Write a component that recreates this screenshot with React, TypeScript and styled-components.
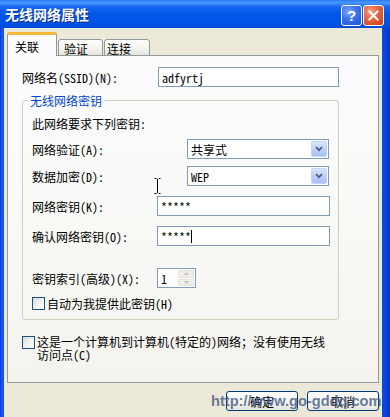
import React from 'react';
import styled, { createGlobalStyle } from 'styled-components';

const CJK = `"Noto Sans CJK SC", "Liberation Sans", sans-serif`;

const GlobalStyle = createGlobalStyle`
  html, body { margin: 0; padding: 0; background: #ffffff; }
  body { font-family: ${CJK}; font-size: 12px; }
`;

const Window = styled.div`
  position: relative;
  width: 390px;
  height: 417px;
  display: flex;
  flex-direction: column;
  overflow: hidden;
  background: linear-gradient(90deg, #0831d9 0px, #1e5df0 2px, #0a4fdc 4px, #0a4fdc 382px, #0842d4 386px, #0831d9 390px);
  font-family: ${CJK};
  font-size: 12px;
  font-feature-settings: "hwid" 1;
  color: #000;
`;

const TitleBar = styled.div`
  height: 28px;
  flex: none;
  display: flex;
  align-items: center;
  padding: 0 6px 0 5px;
  background: linear-gradient(180deg, #2a7af5 0%, #4a9bff 10%, #1565f0 24%, #0057e8 50%, #0055e5 80%, #0049d6 100%);
`;

const Title = styled.span`
  color: #ffffff;
  font-weight: 700;
  font-size: 14px;
  line-height: 16px;
  letter-spacing: 0px;
  text-shadow: 1px 1px 0 #0a2a8c;
`;

const TitleButtons = styled.div`
  margin-left: auto;
  display: flex;
  gap: 1px;
  margin-top: 2px;
`;

const CapButton = styled.div<{ $red?: boolean }>`
  width: 21px;
  height: 21px;
  box-sizing: border-box;
  border: 1px solid #ffffff;
  border-radius: 3px;
  display: flex;
  align-items: center;
  justify-content: center;
  background: ${(p) =>
    p.$red
      ? 'radial-gradient(circle at 35% 30%, #f4a488 0%, #e5643e 45%, #c8401a 100%)'
      : 'radial-gradient(circle at 35% 30%, #7fa9ff 0%, #3a72ef 45%, #1a4fd8 100%)'};
  color: #fff;
  font-family: "Liberation Sans", sans-serif;
  font-weight: 700;
  font-size: 15px;
  line-height: 1;
`;

const Body = styled.div`
  flex: 1;
  margin: 0 8px 0 4px;
  padding: 4px 3px 0 3px;
  background: #ece9d8;
  display: flex;
  flex-direction: column;
`;

const TabsRow = styled.div`
  display: flex;
  align-items: flex-end;
  height: 24px;
  position: relative;
  z-index: 1;
  margin-bottom: -1px;
`;

const Tab = styled.div<{ $active?: boolean; $w: number; $pl: number }>`
  box-sizing: border-box;
  width: ${(p) => p.$w}px;
  height: ${(p) => (p.$active ? 24 : 17)}px;
  margin-right: 1px;
  padding-left: ${(p) => p.$pl}px;
  display: flex;
  align-items: center;
  border: 1px solid #919b9c;
  border-bottom: ${(p) => (p.$active ? 'none' : '1px solid #919b9c')};
  border-top: ${(p) => (p.$active ? '3px solid #f5b63d' : '1px solid #919b9c')};
  border-radius: 3px 3px 0 0;
  background: ${(p) => (p.$active ? '#fcfcfe' : 'linear-gradient(180deg, #ffffff 0%, #f3f3ef 60%, #e4e3dc 100%)')};
  line-height: 13px;
  padding-top: ${(p) => (p.$active ? 1 : 1)}px;
`;

const Panel = styled.div`
  position: relative;
  box-sizing: border-box;
  height: 328px;
  border: 1px solid #919b9c;
  background: linear-gradient(180deg, #fcfcfe 0%, #f9f9f6 50%, #f4f3ee 100%);
  padding: 11px 39px 0 14px;
  display: flex;
  flex-direction: column;
`;

const FormRow = styled.div<{ $mt: number; $h?: number }>`
  display: flex;
  align-items: center;
  margin-top: ${(p) => p.$mt}px;
  height: ${(p) => p.$h ?? 20}px;
  flex: none;
`;

const Label = styled.span<{ $w?: number }>`
  width: ${(p) => (p.$w ? `${p.$w}px` : 'auto')};
  flex: none;
  white-space: nowrap;
  line-height: 13px;
`;

const TextBox = styled.div<{ $w: number }>`
  box-sizing: border-box;
  width: ${(p) => p.$w}px;
  height: 20px;
  border: 1px solid #7f9db9;
  background: #ffffff;
  display: flex;
  align-items: center;
  padding-left: 3px;
  line-height: 13px;
  white-space: nowrap;
`;

const Caret = styled.span`
  display: inline-block;
  width: 1px;
  height: 13px;
  background: #000;
`;

const Group = styled.div`
  position: relative;
  margin-top: 13px;
  border: 1px solid #d0d0bf;
  border-radius: 3px;
  padding: 0 8px 9px 9px;
  display: flex;
  flex-direction: column;
`;

const Legend = styled.span`
  position: absolute;
  top: -7px;
  left: 5px;
  padding: 0 2px;
  background: #fbfbf9;
  color: #0046d5;
  line-height: 13px;
`;

const Combo = styled.div`
  box-sizing: border-box;
  width: 142px;
  height: 20px;
  border: 1px solid #7f9db9;
  background: #ffffff;
  display: flex;
  align-items: center;
  padding: 1px 1px 1px 3px;
  line-height: 13px;
`;

const ComboText = styled.span`
  flex: 1;
`;

const DropButton = styled.div`
  box-sizing: border-box;
  width: 16px;
  height: 16px;
  border: 1px solid #c3d3fd;
  border-radius: 2px;
  background: linear-gradient(180deg, #dbe6ff 0%, #bcd0fa 50%, #a9c1f4 100%);
  display: flex;
  align-items: center;
  justify-content: center;
`;

const Spinner = styled.div`
  box-sizing: border-box;
  width: 39px;
  height: 20px;
  border: 1px solid #7f9db9;
  background: #ffffff;
  display: flex;
  align-items: stretch;
  line-height: 13px;
`;

const SpinValue = styled.span`
  flex: 1;
  display: flex;
  align-items: center;
  padding-left: 3px;
`;

const SpinButtons = styled.div`
  width: 16px;
  display: flex;
  flex-direction: column;
  padding: 1px;
  gap: 1px;
`;

const SpinButton = styled.div`
  flex: 1;
  border-radius: 1px;
  background: #eeede7;
  border: 1px solid #e4e2d8;
  display: flex;
  align-items: center;
  justify-content: center;
`;

const CheckRow = styled.div<{ $mt: number }>`
  display: flex;
  align-items: flex-start;
  gap: 2px;
  margin-top: ${(p) => p.$mt}px;
  flex: none;
`;

const CheckBox = styled.span<{ $mt?: number }>`
  box-sizing: border-box;
  flex: none;
  width: 13px;
  height: 13px;
  margin-top: ${(p) => p.$mt ?? 0}px;
  border: 1px solid #1c5180;
  background: linear-gradient(135deg, #dcdcd7 0%, #f4f4f0 60%, #ffffff 100%);
`;

const CheckText = styled.span`
  line-height: 13px;
  white-space: nowrap;
`;

const ButtonRow = styled.div`
  display: flex;
  justify-content: flex-end;
  gap: 9px;
  margin-top: 8px;
`;

const PushButton = styled.div`
  box-sizing: border-box;
  width: 72px;
  height: 20px;
  border: 1px solid #003c74;
  border-radius: 3px;
  background: linear-gradient(180deg, #ffffff 0%, #f6f6f3 50%, #e6e5dd 100%);
  display: flex;
  align-items: center;
  justify-content: center;
  line-height: 13px;
`;

const IBeam = styled.svg`
  position: absolute;
  left: 146px;
  top: 122px;
`;

const Watermark = styled.span`
  position: absolute;
  left: 211px;
  top: 392px;
  font-family: "Liberation Sans", sans-serif;
  font-weight: 700;
  font-size: 14.6px;
  line-height: 18px;
  color: rgba(70, 92, 135, 0.82);
  white-space: nowrap;
  font-feature-settings: normal;
  pointer-events: none;
`;

const Chevron = () => (
  <svg width="8" height="6" viewBox="0 0 8 6">
    <path d="M1 1.2 L4 4.2 L7 1.2" fill="none" stroke="#4d6185" strokeWidth="1.8" />
  </svg>
);

const SpinArrow = ({ up }: { up?: boolean }) => (
  <svg width="5" height="3" viewBox="0 0 5 3">
    <path d={up ? 'M0 3 L2.5 0 L5 3 Z' : 'M0 0 L2.5 3 L5 0 Z'} fill="#c9c7ba" />
  </svg>
);

export default function App() {
  return (
    <>
      <GlobalStyle />
      <Window>
        <TitleBar>
          <Title>无线网络属性</Title>
          <TitleButtons>
            <CapButton>?</CapButton>
            <CapButton $red>
              <svg width="11" height="11" viewBox="0 0 11 11">
                <path d="M1.5 1.5 L9.5 9.5 M9.5 1.5 L1.5 9.5" stroke="#fff" strokeWidth="2" strokeLinecap="square" />
              </svg>
            </CapButton>
          </TitleButtons>
        </TitleBar>
        <Body>
          <TabsRow>
            <Tab $active $w={50} $pl={7}>关联</Tab>
            <Tab $w={45} $pl={5}>验证</Tab>
            <Tab $w={46} $pl={2}>连接</Tab>
          </TabsRow>
          <Panel>
            <FormRow $mt={0}>
              <Label $w={136}>网络名(SSID)(N):</Label>
              <TextBox $w={181}>adfyrtj</TextBox>
            </FormRow>
            <Group>
              <Legend>无线网络密钥</Legend>
              <FormRow $mt={16} $h={13}>
                <Label>此网络要求下列密钥:</Label>
              </FormRow>
              <FormRow $mt={9}>
                <Label $w={155}>网络验证(A):</Label>
                <Combo>
                  <ComboText>共享式</ComboText>
                  <DropButton><Chevron /></DropButton>
                </Combo>
              </FormRow>
              <FormRow $mt={7}>
                <Label $w={155}>数据加密(D):</Label>
                <Combo>
                  <ComboText>WEP</ComboText>
                  <DropButton><Chevron /></DropButton>
                </Combo>
              </FormRow>
              <FormRow $mt={10}>
                <Label $w={125}>网络密钥(K):</Label>
                <TextBox $w={173}>*****</TextBox>
              </FormRow>
              <FormRow $mt={10}>
                <Label $w={125}>确认网络密钥(O):</Label>
                <TextBox $w={173}>*****<Caret /></TextBox>
              </FormRow>
              <FormRow $mt={22}>
                <Label $w={125}>密钥索引(高级)(X):</Label>
                <Spinner>
                  <SpinValue>1</SpinValue>
                  <SpinButtons>
                    <SpinButton><SpinArrow up /></SpinButton>
                    <SpinButton><SpinArrow /></SpinButton>
                  </SpinButtons>
                </Spinner>
              </FormRow>
              <CheckRow $mt={9}>
                <CheckBox />
                <CheckText>自动为我提供此密钥(H)</CheckText>
              </CheckRow>
            </Group>
            <CheckRow $mt={15}>
              <CheckBox $mt={1} />
              <CheckText>
                这是一个计算机到计算机(特定的)网络；没有使用无线
                <br />
                访问点(C)
              </CheckText>
            </CheckRow>
            <IBeam width="7" height="16" viewBox="0 0 7 16">
              <path d="M0.5 0.5 H2.5 M4.5 0.5 H6.5 M3.5 1 V15 M0.5 15.5 H2.5 M4.5 15.5 H6.5" stroke="#000" strokeWidth="1" fill="none" />
            </IBeam>
          </Panel>
          <ButtonRow>
            <PushButton>确定</PushButton>
            <PushButton>取消</PushButton>
          </ButtonRow>
        </Body>
        <Watermark>http://www.go-gddq.com</Watermark>
      </Window>
    </>
  );
}
